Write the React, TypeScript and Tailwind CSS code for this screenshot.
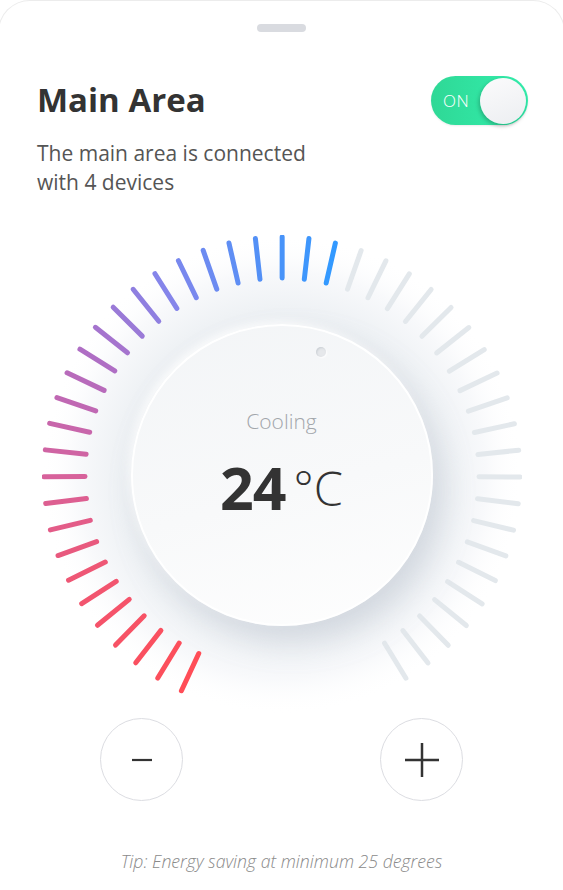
import { FC } from "react";

const CX = 240;
const CY = 240;
const R_IN = 197;
const R_OUT = 238;
const STEP = 6.46;
const TICKS = 48;
const ACTIVE = 27;

// colour stops along the active arc, bottom-left red -> top blue
const STOPS: [number, [number, number, number]][] = [
  [0, [255, 77, 87]],
  [0.22, [240, 86, 114]],
  [0.39, [214, 98, 156]],
  [0.56, [180, 108, 192]],
  [0.74, [130, 134, 236]],
  [0.88, [84, 144, 246]],
  [1, [51, 153, 255]],
];

const colorAt = (t: number) => {
  for (let i = 1; i < STOPS.length; i++) {
    const [p1, c1] = STOPS[i];
    const [p0, c0] = STOPS[i - 1];
    if (t <= p1) {
      const k = (t - p0) / (p1 - p0);
      const c = c0.map((v, j) => Math.round(v + (c1[j] - v) * k));
      return `rgb(${c[0]},${c[1]},${c[2]})`;
    }
  }
  return "rgb(51,153,255)";
};

const Dial: FC = () => {
  const ticks = Array.from({ length: TICKS }, (_, i) => {
    const a = ((-155 + i * STEP) * Math.PI) / 180;
    const s = Math.sin(a);
    const c = Math.cos(a);
    const color = i < ACTIVE ? colorAt(i / (ACTIVE - 1)) : "#e3e8ec";
    return (
      <line
        key={i}
        x1={CX + R_IN * s}
        y1={CY - R_IN * c}
        x2={CX + R_OUT * s}
        y2={CY - R_OUT * c}
        stroke={color}
        strokeWidth={5}
        strokeLinecap="round"
      />
    );
  });

  return (
    <div className="relative w-[480px] h-[480px] mx-auto flex items-center justify-center">
      <svg width={480} height={480} className="absolute inset-0">
        <defs>
          <radialGradient id="halo" cx="50%" cy="50%" r="50%">
            <stop offset="0.6" stopColor="#e9edf1" />
            <stop offset="0.7" stopColor="#eff2f5" />
            <stop offset="0.85" stopColor="#f8f9fb" />
            <stop offset="1" stopColor="#ffffff" stopOpacity="0" />
          </radialGradient>
        </defs>
        <circle cx={CX} cy={CY} r={240} fill="url(#halo)" />
        {ticks}
      </svg>
      {/* knob */}
      <div className="relative w-[302px] h-[302px] rounded-full border-2 border-white bg-[linear-gradient(165deg,#f3f5f7,#f8f9fa_55%,#fefefe)] shadow-[10px_16px_30px_rgba(165,176,190,0.35),-3px_-3px_8px_rgba(255,255,255,0.9)] flex flex-col items-center">
        <div className="absolute left-[183px] top-[21px] w-[10px] h-[10px] rounded-full bg-[#e6e8eb] shadow-[inset_1px_1px_2px_rgba(150,160,170,0.35),1px_1px_2px_rgba(255,255,255,0.9)]" />
        <div className="mt-[80px] text-[21px] font-light text-[#a2a6ab] leading-[30px]">
          Cooling
        </div>
        <div className="mt-[13px] flex items-start text-[#333333]">
          <span className="text-[59px] font-bold leading-[76px] tracking-[-1px]">24</span>
          <span className="ml-[8px] text-[47px] font-light leading-[80px] mt-[-1px]">
            °C
          </span>
        </div>
      </div>
    </div>
  );
};

const Toggle: FC = () => (
  <div className="w-[97px] h-[49px] rounded-full bg-[linear-gradient(90deg,#2fd896,#33efad)] flex items-center justify-between pl-[12px] pr-[2px] shadow-[0_1px_2px_rgba(0,0,0,0.08)]">
    <span className="text-[17px] font-light text-white tracking-[0.5px]">ON</span>
    <div className="w-[46px] h-[46px] rounded-full bg-[linear-gradient(160deg,#fbfbfc,#eceef1)] shadow-[-1px_2px_4px_rgba(0,0,0,0.25)]" />
  </div>
);

const RoundButton: FC<{ plus?: boolean }> = ({ plus }) => (
  <button className="w-[83px] h-[83px] rounded-full border-[1.5px] border-[#dcdde2] bg-white flex items-center justify-center">
    <svg width={36} height={36} viewBox="0 0 36 36">
      {plus ? (
        <>
          <line x1={1} y1={18} x2={35} y2={18} stroke="#333" strokeWidth={2.5} />
          <line x1={18} y1={1} x2={18} y2={35} stroke="#333" strokeWidth={2.5} />
        </>
      ) : (
        <line x1={8} y1={18} x2={28} y2={18} stroke="#333" strokeWidth={2.2} />
      )}
    </svg>
  </button>
);

export default function App() {
  return (
    <div className="w-[563px] h-[890px] overflow-hidden bg-white font-['Open_Sans',sans-serif]">
      <div className="-mx-[2px] h-full rounded-t-[32px] border border-b-0 border-[#ececec] flex flex-col">
        <div className="mx-auto mt-[23px] w-[49px] h-[8px] rounded-full bg-[#d9dbe0]" />
        <div className="flex items-start justify-between pl-[38px] pr-[36px] mt-[44px]">
          <div>
            <h1 className="text-[33px] font-bold text-[#333333] leading-[40px] mt-[4px]">
              Main Area
            </h1>
            <p className="mt-[19px] text-[21px] text-[#555555] leading-[29px]">
              The main area is connected
              <br />
              with 4 devices
            </p>
          </div>
          <Toggle />
        </div>
        <div className="mt-[38px]">
          <Dial />
        </div>
        <div className="flex justify-between px-[101px] mt-[3px]">
          <RoundButton />
          <RoundButton plus />
        </div>
        <p className="mt-[47px] text-center text-[17.7px] font-light italic text-[#8a8a8a]">
          Tip: Energy saving at minimum 25 degrees
        </p>
      </div>
    </div>
  );
}
